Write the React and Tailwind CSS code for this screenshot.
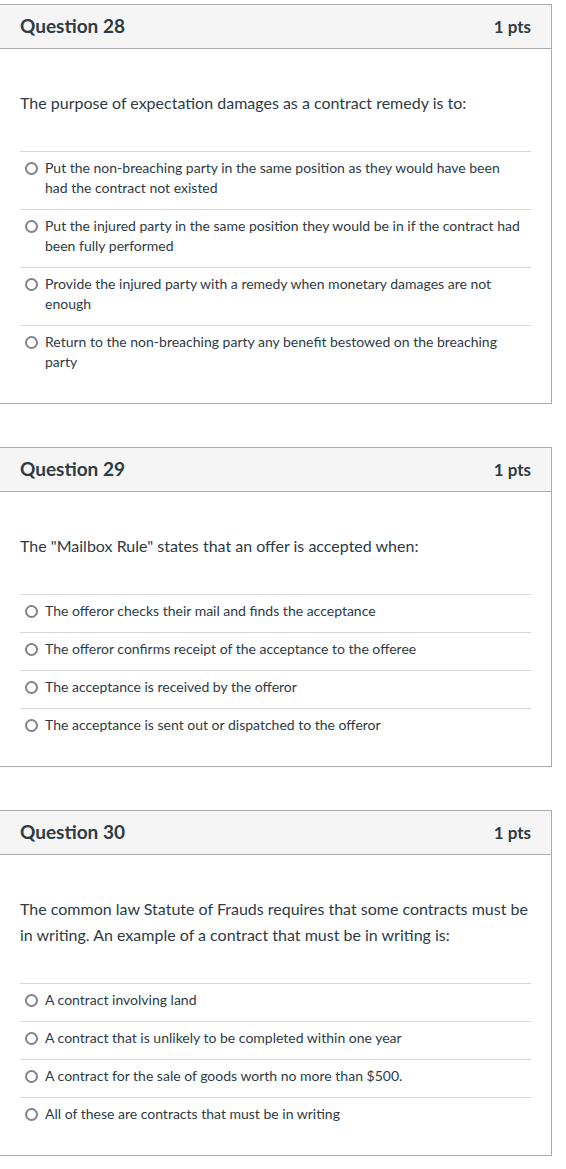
import React from "react";

const questions = [
  {
    num: 28,
    text: ["The purpose of expectation damages as a contract remedy is to:"],
    answers: [
      "Put the non-breaching party in the same position as they would have been had the contract not existed",
      "Put the injured party in the same position they would be in if the contract had been fully performed",
      "Provide the injured party with a remedy when monetary damages are not enough",
      "Return to the non-breaching party any benefit bestowed on the breaching party",
    ],
  },
  {
    num: 29,
    text: ['The "Mailbox Rule" states that an offer is accepted when:'],
    answers: [
      "The offeror checks their mail and finds the acceptance",
      "The offeror confirms receipt of the acceptance to the offeree",
      "The acceptance is received by the offeror",
      "The acceptance is sent out or dispatched to the offeror",
    ],
  },
  {
    num: 30,
    text: [
      "The common law Statute of Frauds requires that some contracts must be in writing. An example of a contract that must be in writing is:",
    ],
    answers: [
      "A contract involving land",
      "A contract that is unlikely to be completed within one year",
      "A contract for the sale of goods worth no more than $500.",
      "All of these are contracts that must be in writing",
    ],
  },
];

const Answer = ({ label }) => {
  return (
    <div className="flex items-start border-t border-[#d7d7d7] pt-[6px] pb-[11px]">
      <span className="mt-[4px] ml-[5px] mr-[7px] h-[13px] w-[13px] shrink-0 rounded-full border-2 border-[#7f848a] bg-white" />
      <span className="pr-[6px] text-[14px] leading-[20px] text-[#2d3b45]">{label}</span>
    </div>
  );
};

const Question = ({ q }) => {
  return (
    <div className="w-[552px] border-y border-r border-[#aaaaaa] bg-white">
      <div className="flex h-[44px] items-center justify-between border-b border-[#aaaaaa] bg-[#f5f5f5] px-5">
        <h2 className="text-[19px] font-bold text-[#2d3b45]">Question {q.num}</h2>
        <span className="text-[17px] font-bold text-[#2d3b45]">1 pts</span>
      </div>
      <div className="px-5 pt-[41px] pb-5">
        <p className="mb-[35px] text-[16px] leading-[26px] text-[#2d3b45]">{q.text}</p>
        <div>
          {q.answers.map((a, i) => (
            <Answer key={i} label={a} />
          ))}
        </div>
      </div>
    </div>
  );
}

export default function App() {
  return (
    <div
      className="min-h-screen bg-white pt-1"
      style={{ fontFamily: "Lato, 'Liberation Sans', sans-serif" }}
    >
      <div className="flex flex-col gap-[43px]">
        {questions.map((q) => (
          <Question key={q.num} q={q} />
        ))}
      </div>
    </div>
  );
}
